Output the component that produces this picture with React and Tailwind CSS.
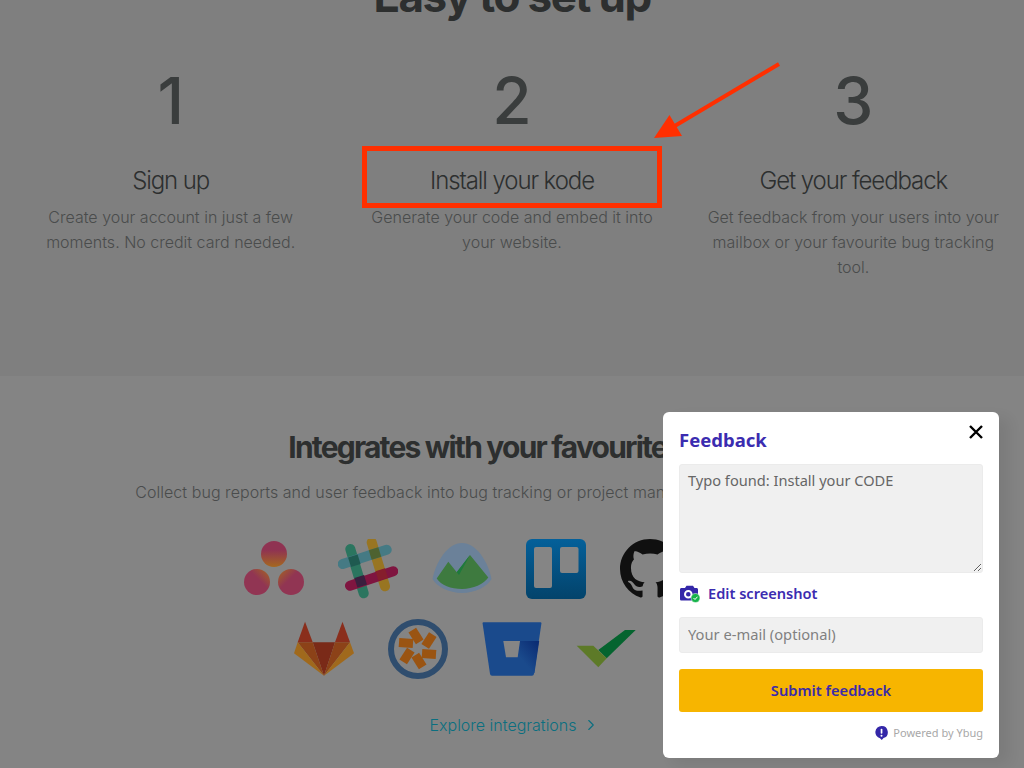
import { ChevronRight } from 'lucide-react';

const steps = [
  { n: '1', title: 'Sign up', text: 'Create your account in just a few moments. No credit card needed.' },
  { n: '2', title: 'Install your kode', text: 'Generate your code and embed it into your website.' },
  { n: '3', title: 'Get your feedback', text: 'Get feedback from your users into your mailbox or your favourite bug tracking tool.' },
];

const AsanaIcon = () => (
  <svg width="60" height="60" viewBox="0 0 60 60">
    <defs>
      <linearGradient id="asana" x1="0" y1="0" x2="0" y2="1">
        <stop offset="0.35" stopColor="#8f3352" />
        <stop offset="1" stopColor="#a5681f" />
      </linearGradient>
      <linearGradient id="asanaL" x1="1" y1="0" x2="0.3" y2="0.7">
        <stop offset="0" stopColor="#a5681f" />
        <stop offset="0.6" stopColor="#913553" />
      </linearGradient>
      <linearGradient id="asanaR" x1="0" y1="0" x2="0.7" y2="0.7">
        <stop offset="0" stopColor="#a5681f" />
        <stop offset="0.6" stopColor="#913553" />
      </linearGradient>
    </defs>
    <circle cx="30" cy="15" r="13" fill="url(#asana)" />
    <circle cx="13" cy="43" r="13" fill="url(#asanaL)" />
    <circle cx="47" cy="43" r="13" fill="url(#asanaR)" />
  </svg>
);

const patch = (cx, cy, fill) => (
  <rect x="-5" y="-5" width="10" height="10" fill={fill} transform={`translate(${cx} ${cy}) rotate(-17)`} />
);

const SlackIcon = () => (
  <svg width="60" height="60" viewBox="0 0 60 60" strokeWidth="10" strokeLinecap="round">
    <line x1="12.3" y1="10" x2="25.7" y2="54.3" stroke="#2b755f" />
    <line x1="33.7" y1="3.3" x2="47" y2="47.3" stroke="#987522" />
    <line x1="4.7" y1="25" x2="48.7" y2="10.7" stroke="#457a84" />
    <line x1="12" y1="46.7" x2="55.3" y2="32.3" stroke="#7f1540" />
    {patch(16.3, 21.7, '#1f5a50')}
    {patch(37, 14.5, '#4e6230')}
    {patch(22.7, 42.3, '#3a1f3e')}
    {patch(43.7, 35.5, '#861e2c')}
  </svg>
);

const BasecampIcon = () => (
  <svg width="60" height="60" viewBox="0 0 60 60">
    <path d="M0.5 40C4 22 16 4 30 4c14 0 26 18 29.5 36C56 47 43 54 30 54 17 54 4 47 0.5 40Z" fill="#6b8199" />
    <path d="M4.7 39.5 16.3 22.7 24.7 33.3 38 16 56.3 38.5C52 45 41 50 30 50 19 50 9 46 4.7 39.5Z" fill="#3e7a3f" />
    <path d="M16.3 22.7 24.7 33.3 38 16 27 36Z" fill="#1e7a3c" />
  </svg>
);

const TrelloIcon = () => (
  <svg width="60" height="60" viewBox="0 0 60 60">
    <defs>
      <linearGradient id="trello" x1="0" y1="0" x2="0" y2="1">
        <stop offset="0" stopColor="#04609a" />
        <stop offset="1" stopColor="#03436b" />
      </linearGradient>
    </defs>
    <rect width="60" height="60" rx="6" fill="url(#trello)" />
    <rect x="8" y="8" width="18" height="41" rx="2" fill="#858585" />
    <rect x="34" y="8" width="18.5" height="26" rx="2" fill="#858585" />
  </svg>
);

const GithubIcon = () => (
  <svg width="60" height="60" viewBox="0 0 16 16" fill="#101010">
    <path d="M8 0C3.58 0 0 3.58 0 8c0 3.54 2.29 6.53 5.47 7.59.4.07.55-.17.55-.38 0-.19-.01-.82-.01-1.49-2.01.37-2.53-.49-2.69-.94-.09-.23-.48-.94-.82-1.13-.28-.15-.68-.52-.01-.53.63-.01 1.08.58 1.23.82.72 1.21 1.87.87 2.33.66.07-.52.28-.87.51-1.07-1.78-.2-3.64-.89-3.64-3.95 0-.87.31-1.59.82-2.15-.08-.2-.36-1.02.08-2.12 0 0 .67-.21 2.2.82.64-.18 1.32-.27 2-.27.68 0 1.36.09 2 .27 1.53-1.04 2.2-.82 2.2-.82.44 1.1.16 1.92.08 2.12.51.56.82 1.27.82 2.15 0 3.07-1.87 3.75-3.65 3.95.29.25.54.73.54 1.48 0 1.07-.01 1.93-.01 2.2 0 .21.15.46.55.38A8.013 8.013 0 0016 8c0-4.42-3.58-8-8-8z" />
  </svg>
);

const GitlabIcon = () => (
  <svg width="60" height="60" viewBox="0 0 60 60">
    <polygon points="11,2.7 3.7,23.3 18.7,23.3" fill="#8a2e1c" />
    <polygon points="48.5,2.7 41,23.3 56,23.3" fill="#8a2e1c" />
    <polygon points="18.7,23.3 41,23.3 30,56.7" fill="#7a2a18" />
    <polygon points="3.7,23.3 18.7,23.3 30,56.7" fill="#8c4218" />
    <polygon points="41,23.3 56,23.3 30,56.7" fill="#8c4218" />
    <polygon points="3.7,23.3 0,34.3 30,56.7" fill="#a0691c" />
    <polygon points="56,23.3 60,34.3 30,56.7" fill="#a0691c" />
  </svg>
);

const PivotalIcon = () => (
  <svg width="60" height="60" viewBox="0 0 60 60">
    <circle cx="30" cy="30" r="27" fill="none" stroke="#2f4d6e" strokeWidth="6" />
    <g fill="#9a5412">
      <rect x="-7" y="-4.5" width="14" height="9" transform="translate(18 24) rotate(4)" />
      <rect x="-7" y="-4.5" width="14" height="9" transform="translate(41 35) rotate(4)" />
      <rect x="-7" y="-4.5" width="14" height="9" transform="translate(28 17) rotate(58)" />
      <rect x="-7" y="-4.5" width="14" height="9" transform="translate(41 21.5) rotate(-57)" />
      <rect x="-7" y="-4.5" width="14" height="9" transform="translate(19 37) rotate(-57)" />
      <rect x="-7" y="-4.5" width="14" height="9" transform="translate(31 42) rotate(58)" />
    </g>
  </svg>
);

const BitbucketIcon = () => (
  <svg width="60" height="60" viewBox="0 0 60 60">
    <defs>
      <linearGradient id="bitbucket" x1="0.9" y1="0" x2="0.1" y2="0.8">
        <stop offset="0" stopColor="#0b2c73" />
        <stop offset="0.7" stopColor="#1a4a8c" />
      </linearGradient>
    </defs>
    <path d="M1.5 3.3H58.5C59.2 3.3 59.5 3.8 59.4 4.5L52 54.8C51.8 56 51 56.7 50 56.7H10C9 56.7 8.2 56 8 54.8L0.6 4.5C0.5 3.8 0.8 3.3 1.5 3.3Z" fill="#1a4a8c" />
    <polygon points="38,22 57.2,22 52.500,54 30,54" fill="url(#bitbucket)" />
    <polygon points="21.3,22 38,22 35.7,38.3 24,38.3" fill="#858585" />
  </svg>
);

const CheckIcon = () => (
  <svg width="60" height="60" viewBox="0 0 60 60">
    <polygon points="22.3,31 49,11 59.7,11 30.7,39.3" fill="#05642f" />
    <polygon points="0.7,26.7 17.3,26.7 30.7,39.3 22.3,48.3" fill="#5d7a28" />
  </svg>
);

const CameraIcon = () => (
  <svg width="20" height="18" viewBox="0 0 20 18">
    <path d="M1.5 3H5L6.5 .8H13L14.5 3H16.500C17.400 3 18 3.600 18 4.500V14C18 15 17.400 15.500 16.500 15.500H1.500C.6 15.500 0 15 0 14V4.500C0 3.600 .6 3 1.500 3Z" fill="#3427a8" />
    <circle cx="8.300" cy="9.300" r="3.300" fill="#3427a8" stroke="#fff" strokeWidth="2" />
    <circle cx="15.500" cy="13" r="4.500" fill="#16b34a" stroke="#fff" strokeWidth="0.5" />
    <path d="M13.500 13l1.500 1.500 2.500-2.800" fill="none" stroke="#fff" strokeWidth="1" />
  </svg>
);

const YbugIcon = () => (
  <svg width="13" height="14" viewBox="0 0 13 14">
    <path d="M6.500 0a6.200 6.200 0 0 1 2 12.100L6.800 14 5 12.200A6.200 6.200 0 0 1 6.500 0Z" fill="#3427a8" />
    <rect x="5.700" y="2.800" width="1.700" height="5" rx="0.800" fill="#fff" />
    <circle cx="6.500" cy="9.800" r="1" fill="#fff" />
  </svg>
);

const App = () => {
  return (
    <div className="relative w-[1024px] h-[768px] overflow-hidden bg-[#848484] font-['Inter',sans-serif]">
      <section className="h-[376px] bg-[#7f7f7f] overflow-hidden">
        <h2 className="-mt-[30px] text-center text-[44px] leading-[52px] font-bold tracking-[-1.6px] text-[#2d2f2f]">
          Easy to set up
        </h2>
        <div className="grid grid-cols-3 mt-[43px]">
          {steps.map((s) => (
            <div key={s.n} className="text-center">
              <div className="text-[64px] leading-[72px] font-medium text-[#3a3d3d]">{s.n}</div>
              <h3 className="mt-[28px] text-[24px] leading-[32px] font-light tracking-[-1.1px] text-[#2d2f2f]">{s.title}</h3>
              <p className="mt-[8px] mx-auto max-w-[300px] text-[16px] leading-[25px] font-light text-[#4a4c4c]">{s.text}</p>
            </div>
          ))}
        </div>
      </section>

      <section className="pt-[53px] text-center">
        <h2 className="text-[30px] leading-[36px] font-bold tracking-[-1.8px] text-[#2d2f2f]">
          Integrates with your favourite tools
        </h2>
        <p className="mt-[15px] pl-[6px] text-[16px] leading-[24px] font-light tracking-[0.05px] text-[#4a4c4c]">
          Collect bug reports and user feedback into bug tracking or project management tools you already use
        </p>
        <div className="mt-[35px] flex justify-center gap-[34px]">
          <AsanaIcon />
          <SlackIcon />
          <BasecampIcon />
          <TrelloIcon />
          <GithubIcon />
          <div className="w-[66px]" />
        </div>
        <div className="mt-[20px] flex justify-center gap-[34px]">
          <GitlabIcon />
          <PivotalIcon />
          <BitbucketIcon />
          <CheckIcon />
          <div className="w-[60px]" />
        </div>
        <a className="mt-[34px] ml-[5px] inline-flex items-center gap-[5px] text-[16px] leading-[24px] font-light text-[#0b6f80]">
          Explore integrations
          <ChevronRight size={18} strokeWidth={1.5} />
        </a>
      </section>

      {/* annotation drawn on the screenshot */}
      <div className="absolute left-[362px] top-[146px] w-[300px] h-[62px] border-[5px] border-[#ff2f00]" />
      <svg className="absolute left-[640px] top-[50px]" width="150" height="100" viewBox="0 0 150 100">
        <line x1="139" y1="14" x2="33" y2="77" stroke="#ff2f00" strokeWidth="4" />
        <polygon points="14,88 29.500,65 42,86" fill="#ff2f00" />
      </svg>

      {/* feedback widget */}
      <div className="absolute left-[663px] top-[412px] w-[336px] h-[346px] rounded-md bg-white px-4 shadow-[10px_6px_14px_rgba(0,0,0,0.07)] font-['Noto_Sans',sans-serif]">
        <div className="relative h-[52px] pt-[4px] flex items-center">
          <span className="text-[18.5px] font-bold text-[#3b2cb0]">Feedback</span>
          <svg className="absolute right-0 top-[13px]" width="14" height="14" viewBox="0 0 14 14">
            <path d="M1 1l12 12M13 1L1 13" stroke="#000" strokeWidth="2.400" />
          </svg>
        </div>
        <textarea
          className="block w-full h-[109px] rounded-[3px] border border-[#ebebeb] bg-[#f0f0f0] px-2 py-[5px] text-[14.6px] leading-[20px] text-[#666] outline-none"
          defaultValue="Typo found: Install your CODE"
        />
        <div className="mt-[11px] ml-[1px] flex items-center gap-[8px] h-[20px]">
          <CameraIcon />
          <span className="text-[14.6px] font-semibold text-[#3b2cb0]">Edit screenshot</span>
        </div>
        <input
          className="mt-[13px] block w-full h-[36px] rounded-[3px] border border-[#ebebeb] bg-[#f0f0f0] px-2 pb-[2px] text-[14.7px] text-[#666] placeholder:text-[#808080] outline-none"
          placeholder="Your e-mail (optional)"
        />
        <button className="mt-[16px] block w-full h-[43px] rounded-[3px] bg-[#f7b500] text-[14.7px] font-semibold text-[#3b2ba8]">
          Submit feedback
        </button>
        <div className="mt-[13px] flex items-center justify-end gap-[5px] text-[11px] text-[#a8a8a8]">
          <YbugIcon />
          Powered by Ybug
        </div>
      </div>
    </div>
  );
};

export default App;
